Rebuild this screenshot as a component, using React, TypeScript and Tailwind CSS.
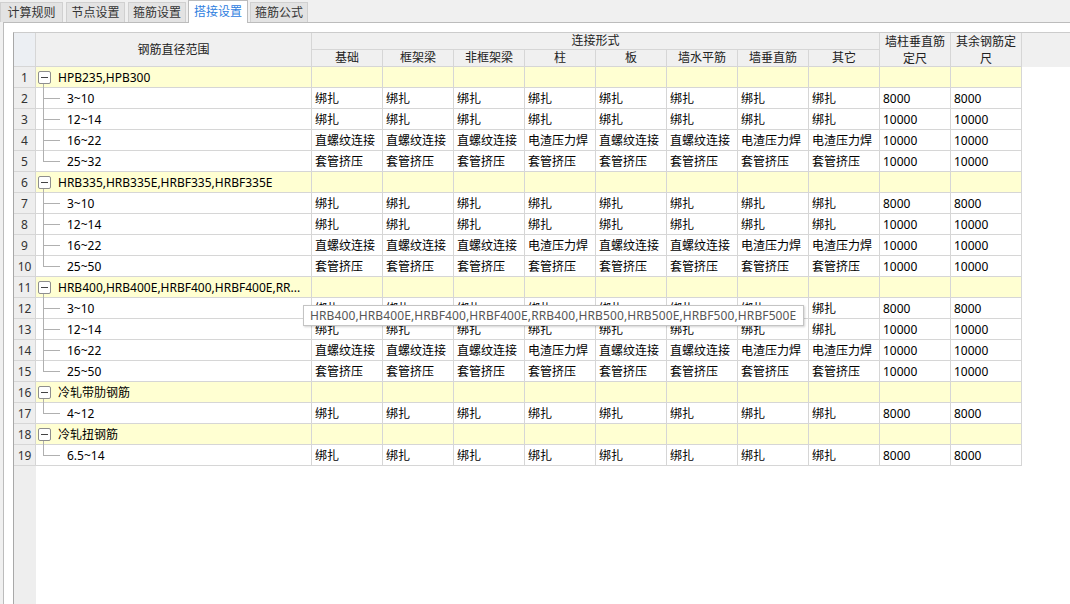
import React from "react";

type Row =
  | { kind: "group"; label: string }
  | { kind: "item"; label: string; last: boolean; values: string[] };

const BIND = ["绑扎", "绑扎", "绑扎", "绑扎", "绑扎", "绑扎", "绑扎", "绑扎"];
const THREAD = ["直螺纹连接", "直螺纹连接", "直螺纹连接", "电渣压力焊", "直螺纹连接", "直螺纹连接", "电渣压力焊", "电渣压力焊"];
const SLEEVE = ["套管挤压", "套管挤压", "套管挤压", "套管挤压", "套管挤压", "套管挤压", "套管挤压", "套管挤压"];

const steelGroup = (label: string, lastRange: string): Row[] => [
  { kind: "group", label },
  { kind: "item", label: "3~10", last: false, values: [...BIND, "8000", "8000"] },
  { kind: "item", label: "12~14", last: false, values: [...BIND, "10000", "10000"] },
  { kind: "item", label: "16~22", last: false, values: [...THREAD, "10000", "10000"] },
  { kind: "item", label: lastRange, last: true, values: [...SLEEVE, "10000", "10000"] },
];

const rows: Row[] = [
  ...steelGroup("HPB235,HPB300", "25~32"),
  ...steelGroup("HRB335,HRB335E,HRBF335,HRBF335E", "25~50"),
  ...steelGroup("HRB400,HRB400E,HRBF400,HRBF400E,RR...", "25~50"),
  { kind: "group", label: "冷轧带肋钢筋" },
  { kind: "item", label: "4~12", last: true, values: [...BIND, "8000", "8000"] },
  { kind: "group", label: "冷轧扭钢筋" },
  { kind: "item", label: "6.5~14", last: true, values: [...BIND, "8000", "8000"] },
];

const subHeaders = ["基础", "框架梁", "非框架梁", "柱", "板", "墙水平筋", "墙垂直筋", "其它"];

const tabs = [
  { name: "计算规则", w: "w-[63px]", ml: "ml-0" },
  { name: "节点设置", w: "w-[59px]", ml: "ml-[3px]" },
  { name: "箍筋设置", w: "w-[58px]", ml: "ml-[3px]" },
  { name: "搭接设置", w: "w-[60px]", ml: "ml-[2px]", active: true },
  { name: "箍筋公式", w: "w-[58px]", ml: "ml-[2px]" },
];

const TreeCell: React.FC<{ row: Row }> = ({ row }) => {
  if (row.kind === "group") {
    return (
      <div className="relative flex w-[276px] shrink-0 items-center border-r border-b border-[#d6d6d6] overflow-hidden whitespace-nowrap">
        <span className="ml-[2px] flex h-[13px] w-[13px] shrink-0 items-center justify-center rounded-[2px] border border-[#8e8e8e] bg-white">
          <span className="h-px w-[7px] bg-[#444]" />
        </span>
        <span className="ml-[7px] pt-px text-black">{row.label}</span>
        <span className="absolute left-[7px] top-[17px] bottom-[-1px] w-px bg-[#b0b0b0]" />
      </div>
    );
  }
  return (
    <div className="relative flex w-[276px] shrink-0 items-center border-r border-b border-[#d6d6d6]">
      <span
        className={
          row.last
            ? "absolute left-[7px] top-[-1px] h-[11px] w-px bg-[#b0b0b0]"
            : "absolute left-[7px] top-[-1px] bottom-[-1px] w-px bg-[#b0b0b0]"
        }
      />
      <span className="absolute left-[7px] top-[10px] h-px w-[17px] bg-[#b0b0b0]" />
      <span className="ml-[31px] pt-px text-black">{row.label}</span>
    </div>
  );
};

export default function App() {
  return (
    <div className="relative flex h-[604px] w-[1070px] flex-col overflow-hidden bg-[#f0f0f0] font-['Noto_Sans','Noto_Sans_CJK_SC',sans-serif] text-[12px] leading-[16px] text-[#222]">
      {/* tab strip */}
      <div className="flex h-[22px] shrink-0 items-end">
        {tabs.map((t) =>
          t.active ? (
            <div
              key={t.name}
              className={`${t.w} ${t.ml} relative top-px flex h-[23px] items-center justify-center border-x border-t border-[#bcbcbc] bg-white text-[#2f80e0]`}
            >
              {t.name}
            </div>
          ) : (
            <div
              key={t.name}
              className={`${t.w} ${t.ml} flex h-[20px] items-center justify-center border-x border-t border-[#d0d0d0] bg-[#e3e3e3] text-[#333]`}
            >
              {t.name}
            </div>
          )
        )}
      </div>

      {/* panel */}
      <div className="ml-[3px] flex min-h-0 flex-1 flex-col border-l border-t border-[#bcbcbc] bg-white pl-[9px] pt-[9px]">
        <div className="flex min-h-0 flex-1 border-l border-t border-l-[#a8a8a8] border-t-[#cccccc]">
          {/* row number column */}
          <div className="flex w-[22px] shrink-0 flex-col bg-[#eeeeee] text-[#333]">
            <div className="h-[34px] shrink-0 border-r border-b border-[#d6d6d6] bg-[#eceff3]" />
            {rows.map((_, i) => (
              <div
                key={i}
                className="flex h-[21px] shrink-0 items-center justify-center border-r border-b border-[#d6d6d6] pt-px"
              >
                {i + 1}
              </div>
            ))}
          </div>

          {/* grid body */}
          <div className="flex min-w-0 flex-1 flex-col">
            <div className="flex h-[34px] shrink-0 bg-[#f0f0f0] text-[#222]">
              <div className="flex w-[276px] shrink-0 items-center justify-center border-r border-b border-[#d6d6d6]">
                钢筋直径范围
              </div>
              <div className="flex w-[568px] shrink-0 flex-col">
                <div className="flex h-[17px] items-center justify-center border-r border-b border-[#d6d6d6]">
                  连接形式
                </div>
                <div className="flex h-[17px]">
                  {subHeaders.map((h) => (
                    <div
                      key={h}
                      className="flex w-[71px] shrink-0 items-center justify-center border-r border-b border-[#d6d6d6]"
                    >
                      {h}
                    </div>
                  ))}
                </div>
              </div>
              <div className="flex w-[71px] shrink-0 items-center justify-center border-r border-b border-[#d6d6d6] px-[3px] text-center leading-[17px]">
                墙柱垂直筋定尺
              </div>
              <div className="flex w-[71px] shrink-0 items-center justify-center border-r border-b border-[#d6d6d6] px-[3px] text-center leading-[17px]">
                其余钢筋定尺
              </div>
            </div>

            {rows.map((row, i) => (
              <div
                key={i}
                className={row.kind === "group" ? "flex h-[21px] shrink-0 bg-[#ffffd2]" : "flex h-[21px] shrink-0"}
              >
                <div className={row.kind === "group" ? "flex bg-[#ffffd2]" : "flex bg-white"}>
                  <TreeCell row={row} />
                  {Array.from({ length: 10 }).map((_, c) => (
                    <div
                      key={c}
                      className="flex w-[71px] shrink-0 items-center overflow-hidden whitespace-nowrap border-r border-b border-[#d6d6d6] pl-[3px] pt-px text-black"
                    >
                      {row.kind === "item" ? row.values[c] : ""}
                    </div>
                  ))}
                </div>
                <div className="flex-1 bg-white" />
              </div>
            ))}
            <div className="flex-1 bg-white" />
          </div>
        </div>
      </div>

      {/* tooltip over row 12 */}
      <div className="absolute left-[303px] top-[305px] flex h-[21px] w-[501px] items-center whitespace-nowrap border border-[#c4c4c4] bg-white pl-[6px] tracking-[0.11px] text-[#575757] shadow-[1px_1px_2px_rgba(0,0,0,0.18)]">
        HRB400,HRB400E,HRBF400,HRBF400E,RRB400,HRB500,HRB500E,HRBF500,HRBF500E
      </div>
    </div>
  );
}
